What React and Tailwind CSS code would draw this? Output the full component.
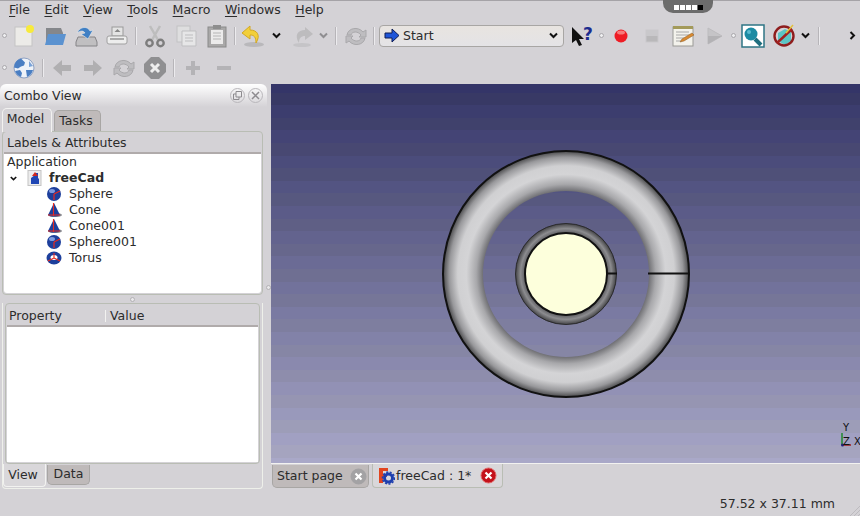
const font = { fontFamily: '"DejaVu Sans", sans-serif' };

// 3D view background is banded, top to bottom
const bands = Array.from({ length: 31 }, (_, i) => {
  const t = i / 30;
  const r = Math.round(52 + t * 117);
  const g = Math.round(53 + t * 115);
  const b = Math.round(104 + t * 96) - (i % 2 ? 6 : 0);
  return { y: Math.round(i * 12.6) - 4, fill: `rgb(${r},${g},${b})` };
});

function Scene() {
  return (
    <svg width="589" height="379" viewBox="0 0 589 379" className="block">
      <defs>
        <radialGradient id="big" gradientUnits="userSpaceOnUse" cx="295" cy="190" r="123">
          <stop offset="0.675" stopColor="#707074" />
          <stop offset="0.73" stopColor="#a8a8ab" />
          <stop offset="0.81" stopColor="#d4d4d6" />
          <stop offset="0.88" stopColor="#d0d0d2" />
          <stop offset="0.95" stopColor="#98989b" />
          <stop offset="1" stopColor="#48484a" />
        </radialGradient>
        <radialGradient id="small" gradientUnits="userSpaceOnUse" cx="295" cy="190" r="51">
          <stop offset="0.8" stopColor="#5a5a5e" />
          <stop offset="0.89" stopColor="#8c8c8f" />
          <stop offset="1" stopColor="#3c3c3e" />
        </radialGradient>
      </defs>
      {bands.map((b) => (
        <rect key={b.y} x="0" y={b.y} width="589" height="14" fill={b.fill} shapeRendering="crispEdges" />
      ))}
      <path
        fillRule="evenodd"
        fill="url(#big)"
        d="M295 67a123 123 0 1 0 0.01 0ZM295 107a83 83 0 1 1 -0.01 0Z"
      />
      <circle cx="295" cy="190" r="123" fill="none" stroke="#111" strokeWidth="2" />
      <circle cx="295" cy="190" r="50.5" fill="url(#small)" stroke="#2a2a2c" strokeWidth="1" />
      <circle cx="295" cy="190" r="41" fill="#fdffdc" stroke="#111" strokeWidth="2" />
      <path d="M377 189.5H418M336 189.5H346" stroke="#111" strokeWidth="2" />
      <path d="M571 349V361" stroke="#1f8a2f" strokeWidth="1.5" />
      <path d="M571 361H580" stroke="#a11d1d" strokeWidth="1.5" />
      <circle cx="571.5" cy="361" r="1.5" fill="#22227a" />
      <text x="572" y="347" fontSize="10" fill="#111" fontFamily="DejaVu Sans">Y</text>
      <text x="572" y="361" fontSize="10" fill="#111" fontFamily="DejaVu Sans">Z</text>
      <text x="583" y="361" fontSize="10" fill="#111" fontFamily="DejaVu Sans">X</text>
    </svg>
  );
}

const Slot = ({ children }) => (
  <div className="flex h-full w-[31px] shrink-0 items-center justify-center">{children}</div>
);

const Dot = () => (
  <div className="flex h-full w-2 shrink-0 items-center justify-center">
    <div className="h-[5px] w-[5px] rounded-full border border-[#a9a7ab] bg-[#eeeef0]" />
  </div>
);

const Sep = ({ className }) => (
  <div className={`flex h-full shrink-0 items-center justify-center ${className}`}>
    <div className="h-[18px] w-px bg-[#b7b5b9] shadow-[1px_0_0_#ecebee]" />
  </div>
);

const Chevron = ({ color = "#111" }) => (
  <svg width="9" height="7" viewBox="0 0 9 7">
    <path d="M1 1.5L4.5 5L8 1.5" fill="none" stroke={color} strokeWidth="2" />
  </svg>
);

const I = ({ children }) => (
  <svg width="24" height="24" viewBox="0 0 24 24">{children}</svg>
);

const NewIcon = () => (
  <I>
    <rect x="3" y="3" width="17" height="19" fill="#ecebe8" stroke="#c4c3c4" />
    <circle cx="18" cy="5" r="4" fill="#f7ea3c" />
  </I>
);
const OpenIcon = () => (
  <I>
    <path d="M3 4h15l2 5v11H3Z" fill="#85878b" />
    <path d="M5 10h18l-3 11H2Z" fill="#5b92d0" />
  </I>
);
const SaveIcon = () => (
  <I>
    <path d="M4 13h17l2 5v4H2v-4Z" fill="#c0bfc1" stroke="#858487" />
    <path d="M3 9C6 2 14 2 16 7l3-1-5 9-7-5 4-1C9 6 6 7 3 9Z" fill="#3f7fc4" stroke="#e9e9ea" strokeWidth="0.6" />
  </I>
);
const PrintIcon = () => (
  <I>
    <rect x="7" y="3" width="11" height="9" fill="#e4e4e4" stroke="#999" />
    <path d="M12.5 5l3 3h-6Z" fill="#888" />
    <rect x="2" y="12" width="20" height="8" rx="2" fill="#ededed" stroke="#a0a0a0" />
    <rect x="5" y="14" width="14" height="2" fill="#aaa" />
  </I>
);
const CutIcon = () => (
  <I>
    <path d="M7 2l8 14M17 2L9 16" stroke="#bdbdbd" strokeWidth="2.5" />
    <circle cx="6.5" cy="19" r="3.2" fill="none" stroke="#7d7d7d" strokeWidth="2.4" />
    <circle cx="17.5" cy="19" r="3.2" fill="none" stroke="#7d7d7d" strokeWidth="2.4" />
  </I>
);
const CopyIcon = () => (
  <I>
    <rect x="3" y="2" width="13" height="16" fill="#dededf" stroke="#c2c2c4" />
    <path d="M8 7h14v15H8Z" fill="#e6e6e7" stroke="#bfbfc1" />
    <path d="M11 11h8M11 14h8M11 17h8" stroke="#bdbdbf" />
  </I>
);
const PasteIcon = () => (
  <I>
    <rect x="3" y="3" width="18" height="20" fill="#a9a8a8" stroke="#8a8a8a" />
    <rect x="6" y="6" width="12" height="14" fill="#ecebeb" />
    <rect x="8" y="1" width="8" height="4" fill="#8e8e8e" />
    <path d="M8 9h8M8 12h8M8 15h8" stroke="#b5b5b5" />
  </I>
);
const UndoIcon = () => (
  <I>
    <ellipse cx="13" cy="20.5" rx="10" ry="2.5" fill="#b9b8bb" />
    <path d="M9 2L1 9l8 6v-4c4 0 6 2 6 8 5-8 1-13-6-13Z" fill="#f2cf3a" stroke="#d3a824" />
  </I>
);
const RedoIcon = () => (
  <I>
    <ellipse cx="11" cy="21" rx="9" ry="2" fill="#c5c4c7" />
    <path d="M14 3l8 7-8 6v-4c-4 0-6 2-6 7-5-8-1-13 6-13Z" fill="#bdbcbe" />
  </I>
);
const RefreshIcon = () => (
  <I>
    <path d="M3 11C4 4 14 2 19 8l3-2v7h-7l2-2C14 7 8 7 7 11Z" fill="#bebdc0" stroke="#a9a8ab" />
    <path d="M21 14c-1 7-11 9-16 3l-3 2v-7h7l-2 2c3 4 9 4 10 0Z" fill="#bebdc0" stroke="#a9a8ab" />
  </I>
);
const GlobeIcon = () => (
  <I>
    <circle cx="12" cy="12" r="10" fill="#eef2f8" stroke="#8fa2c4" />
    <path d="M9 2.5a10 10 0 0 0-7 9l4 1 3-2 3-1 1-3ZM3 15l5-1 2 3-1 4a10 10 0 0 1-6-6ZM14 14l7 0a10 10 0 0 1-6 7Z" fill="#4a7ec2" />
    <path d="M17 5l4 5-4 1Z" fill="#7ba3d8" />
  </I>
);
const BackIcon = () => (
  <I>
    <path d="M3 12l9-8v5h9v6h-9v5Z" fill="#b0afb1" />
  </I>
);
const ForwardIcon = () => (
  <I>
    <path d="M21 12l-9-8v5H3v6h9v5Z" fill="#b0afb1" />
  </I>
);
const StopIcon = () => (
  <I>
    <path d="M8 1h8l7 7v8l-7 7H8l-7-7V8Z" fill="#8f8f91" />
    <path d="M8 8l8 8M16 8l-8 8" stroke="#ededed" strokeWidth="3" />
  </I>
);
const PlusIcon = () => (
  <I>
    <path d="M12 5v14M5 12h14" stroke="#b4b3b6" strokeWidth="4" />
  </I>
);
const MinusIcon = () => (
  <I>
    <path d="M5 12h14" stroke="#b4b3b6" strokeWidth="4" />
  </I>
);
const WhatsThisIcon = () => (
  <I>
    <path d="M2 3v16l4-3 3 6 3-1-3-6h5Z" fill="#111" />
    <text x="13" y="16" fontSize="17" fontWeight="700" fill="#1c2c8e" fontFamily="DejaVu Sans">?</text>
  </I>
);
const RecordIcon = () => (
  <I>
    <circle cx="12" cy="12" r="6.5" fill="#ee1c25" />
    <ellipse cx="12" cy="8.5" rx="4" ry="2" fill="#f87a7a" />
  </I>
);
const MacroStopIcon = () => (
  <I>
    <rect x="6" y="6" width="12" height="12" fill="#b9b8ba" stroke="#c9c8cb" />
    <rect x="6" y="6" width="12" height="6" fill="#c9c8cb" />
  </I>
);
const MacroIcon = () => (
  <I>
    <rect x="2" y="3" width="20" height="19" fill="#f3f2ec" stroke="#9a9a96" />
    <rect x="2" y="2" width="20" height="3" fill="#a39a5a" />
    <path d="M5 8h13M5 11h13M5 14h8M5 17h6" stroke="#a8a8a8" />
    <path d="M9 18l2-3 10-6 2 2-10 6Z" fill="#d98a32" stroke="#8b5a22" strokeWidth="0.5" />
  </I>
);
const PlayIcon = () => (
  <I>
    <path d="M6 4l14 8-14 8Z" fill="#c5c4c7" stroke="#bdbcbf" />
    <path d="M6 12h14l-14 8Z" fill="#b3b2b5" />
  </I>
);
const ZoomIcon = () => (
  <I>
    <rect x="1" y="1" width="22" height="22" fill="#fff" stroke="#2e7585" strokeWidth="1.5" />
    <path d="M14 15l6 6" stroke="#1f6f7f" strokeWidth="4" />
    <circle cx="10" cy="10" r="6.5" fill="#1b8ba3" />
    <circle cx="8" cy="8" r="2" fill="#58bccf" />
  </I>
);
const NopeIcon = () => (
  <I>
    <path d="M6 9l7-4 6 3v9l-6 4-7-4Z" fill="#5cc5c5" />
    <circle cx="12" cy="12" r="9.5" fill="none" stroke="#8e1d1d" strokeWidth="2.4" />
    <path d="M5 19L20 5" stroke="#a3201f" strokeWidth="2.4" />
    <path d="M14 9l7-8" stroke="#e3c13a" strokeWidth="1.5" />
  </I>
);
const TinyClose = ({ fill, ring }) => (
  <svg width="17" height="17" viewBox="0 0 17 17">
    <circle cx="8.5" cy="8.5" r="7.5" fill={fill} stroke={ring} />
    <path d="M5.5 5.5l6 6M11.5 5.5l-6 6" stroke="#fff" strokeWidth="2.2" />
  </svg>
);
const DockBtn = ({ children }) => (
  <div className="flex h-[15px] w-[15px] items-center justify-center rounded-full border border-[#b9b7bb] text-[#8d8b8f]">
    {children}
  </div>
);

const SphereIcon = () => (
  <svg width="16" height="16" viewBox="0 0 16 16">
    <circle cx="8" cy="8" r="7" fill="#1d3f9c" />
    <ellipse cx="6" cy="5" rx="3" ry="2" fill="#7f9be0" />
    <path d="M8 8L14 5M8 8L8 14" stroke="#e8291f" strokeWidth="1.2" />
  </svg>
);
const ConeIcon = () => (
  <svg width="16" height="16" viewBox="0 0 16 16">
    <ellipse cx="9" cy="13" rx="7" ry="2" fill="#8a8a90" />
    <path d="M8 1L14 13C10 15 5 15 2 13Z" fill="#1d3f9c" />
    <path d="M7.5 1V14M2 13H14" stroke="#e8291f" strokeWidth="1.1" />
  </svg>
);
const TorusIcon = () => (
  <svg width="16" height="16" viewBox="0 0 16 16">
    <ellipse cx="8" cy="8" rx="7.5" ry="6.5" fill="#1d3f9c" />
    <ellipse cx="8" cy="7.5" rx="3.5" ry="2.5" fill="#fff" />
    <path d="M8 8V3M8 8L14 11M8 8L2 11" stroke="#e8291f" strokeWidth="1.1" />
  </svg>
);
const DocIcon = () => (
  <svg width="16" height="16" viewBox="0 0 16 16">
    <rect x="1" y="0.5" width="13" height="15" fill="#ececec" stroke="#c4c4c4" />
    <path d="M4 8l4-3v-2h3v5l1 1v5H4Z" fill="#2046b4" />
    <path d="M5 6l3-4 3 4Z" fill="#d2281e" />
  </svg>
);
const TabDocIcon = () => (
  <svg width="16" height="18" viewBox="0 0 16 18">
    <path d="M0 1h9v3H4v3h4v3H4v6H0Z" fill="#e2451f" />
    <circle cx="9.5" cy="11" r="4" fill="none" stroke="#1e3fae" strokeWidth="3" />
    <circle cx="9.5" cy="11" r="6" fill="none" stroke="#1e3fae" strokeWidth="1.5" strokeDasharray="2 1.6" />
  </svg>
);

const menus = ["File", "Edit", "View", "Tools", "Macro", "Windows", "Help"];
const tree = [
  { name: "Sphere", Icon: SphereIcon },
  { name: "Cone", Icon: ConeIcon },
  { name: "Cone001", Icon: ConeIcon },
  { name: "Sphere001", Icon: SphereIcon },
  { name: "Torus", Icon: TorusIcon },
];

export default function App() {
  return (
    <div
      style={font}
      className="relative flex h-[516px] w-[860px] flex-col overflow-hidden bg-[#d4d2d6] text-[12.5px] leading-4 text-[#2c2c2c]"
    >
      <div className="absolute left-[663px] top-0 flex h-[13px] w-[50px] items-start justify-center gap-px rounded-b-[10px] bg-[#6c6c6c] pt-[5px]">
        <span className="h-[5px] w-[5px] bg-white" />
        <span className="h-[5px] w-[5px] bg-white" />
        <span className="h-[5px] w-[5px] bg-white" />
        <span className="h-[5px] w-[5px] bg-white" />
        <span className="h-[5px] w-[5px] bg-black" />
      </div>

      {/* menu bar */}
      <div className="flex h-[19px] shrink-0 items-center border-t border-[#a5a3a7] pb-px pl-[9px]">
        {menus.map((m) => (
          <span key={m} className="mr-[14.5px]">
            <span className="underline underline-offset-2">{m[0]}</span>
            {m.slice(1)}
          </span>
        ))}
      </div>

      {/* toolbars */}
      <div className="flex h-[33px] shrink-0 items-center">
        <Dot />
        <Slot><NewIcon /></Slot>
        <Slot><OpenIcon /></Slot>
        <Slot><SaveIcon /></Slot>
        <Slot><PrintIcon /></Slot>
        <Sep className="w-[7px]" />
        <Slot><CutIcon /></Slot>
        <Slot><CopyIcon /></Slot>
        <Slot><PasteIcon /></Slot>
        <Sep className="w-[5px]" />
        <Slot><UndoIcon /></Slot>
        <div className="flex w-[19px] items-center justify-center pr-[3px]"><Chevron /></div>
        <Slot><RedoIcon /></Slot>
        <div className="flex w-[11px] items-center justify-center"><Chevron color="#8f8e91" /></div>
        <Sep className="w-3" />
        <div className="flex h-full w-[29px] items-center justify-center"><RefreshIcon /></div>
        <Sep className="w-[6px]" />
        <div className="ml-[3px] flex h-[22px] w-[185px] shrink-0 items-center justify-between rounded-[4px] border border-[#a8a6a4] bg-gradient-to-b from-[#e8e4e0] to-[#e4e3e6] pl-[4px] pr-[5px]">
          <span className="flex items-center gap-[3px]">
            <svg width="16" height="15" viewBox="0 0 16 15">
              <path d="M1 5h7V1l7 6.5L8 14v-4H1Z" fill="#1f55d8" stroke="#0e1d55" />
            </svg>
            Start
          </span>
          <Chevron />
        </div>
        <div className="ml-[3px] flex h-full w-[30px] items-center justify-center"><WhatsThisIcon /></div>
        <Dot />
        <Slot><RecordIcon /></Slot>
        <Slot><MacroStopIcon /></Slot>
        <Slot><MacroIcon /></Slot>
        <Slot><PlayIcon /></Slot>
        <Dot />
        <Slot><ZoomIcon /></Slot>
        <Slot><NopeIcon /></Slot>
        <div className="flex w-3 items-center justify-center"><Chevron /></div>
        <Sep className="w-[14px]" />
        <div className="ml-auto mr-[4px] flex w-[8px] items-center justify-center">
          <svg width="7" height="9" viewBox="0 0 7 9">
            <path d="M1.5 1L5 4.5L1.5 8" fill="none" stroke="#111" strokeWidth="2" />
          </svg>
        </div>
      </div>
      <div className="flex h-[32px] shrink-0 items-center pb-[1px]">
        <Dot />
        <Slot><GlobeIcon /></Slot>
        <Sep className="w-[7px]" />
        <Slot><BackIcon /></Slot>
        <Slot><ForwardIcon /></Slot>
        <Slot><RefreshIcon /></Slot>
        <Slot><StopIcon /></Slot>
        <Sep className="w-[7px]" />
        <Slot><PlusIcon /></Slot>
        <Slot><MinusIcon /></Slot>
      </div>

      <div className="flex min-h-0 flex-1">
        {/* combo view */}
        <div className="relative flex w-[271px] shrink-0 flex-col pl-px pr-[8px]">
          <div className="-ml-px -mr-[4px] flex h-[23px] shrink-0 items-center justify-between rounded-t-md bg-gradient-to-b from-white to-[#d4d2d6] pl-[4px] pr-[4px]">
            <span>Combo View</span>
            <span className="flex gap-[3px]">
              <DockBtn>
                <svg width="9" height="9" viewBox="0 0 9 9">
                  <path d="M3 .5h5.5V6H3ZM.5 3H3M.5 3v5.5H6V6" fill="none" stroke="currentColor" />
                </svg>
              </DockBtn>
              <DockBtn>
                <svg width="9" height="9" viewBox="0 0 9 9">
                  <path d="M1 1l7 7M8 1L1 8" stroke="currentColor" strokeWidth="1.5" />
                </svg>
              </DockBtn>
            </span>
          </div>

          <div className="flex h-[24px] shrink-0 items-end pl-px">
            <div className="z-10 -mb-px flex h-[24px] w-[50px] items-center justify-center rounded-t-[5px] border border-b-0 border-[#f2f2f0] bg-[#d4d2d6] pb-[3px] pr-[3px]">
              Model
            </div>
            <div className="ml-[2px] flex h-[21px] w-[47px] items-center justify-center rounded-t-[5px] border border-b-0 border-[#a8a6a4] bg-[#bfbaba] pb-[1px] pr-[3px]">
              Tasks
            </div>
          </div>

          <div className="ml-px flex h-[164px] shrink-0 flex-col rounded-[4px] border border-[#b9bdb4] p-px">
            <div className="flex h-[21px] shrink-0 items-center border-b-2 border-[#b0abab] pl-[3px] pt-px">
              Labels &amp; Attributes
            </div>
            <div className="flex-1 rounded-b-[3px] bg-white pl-[3px]">
              <div className="h-4">Application</div>
              <div className="flex h-4 items-center">
                <span className="ml-[3px] flex w-[7px] items-center justify-center">
                  <Chevron />
                </span>
                <span className="ml-[10px]"><DocIcon /></span>
                <b className="ml-[6px]">freeCad</b>
              </div>
              {tree.map(({ name, Icon }) => (
                <div key={name} className="flex h-4 items-center pl-[39px]">
                  <Icon />
                  <span className="ml-[7px]">{name}</span>
                </div>
              ))}
            </div>
          </div>

          <div className="flex h-[8px] shrink-0 items-center justify-center">
            <div className="h-[5px] w-[5px] rounded-full border border-[#b3b1b5] bg-[#e9e8ea]" />
          </div>

          <div className="ml-px flex h-[186px] shrink-0 flex-col rounded-b-[4px] border-b border-[#eef0ea] border-x">
            <div className="mx-[2px] flex h-[161px] shrink-0 flex-col rounded-[4px] border border-[#b9bdb4] p-px">
              <div className="flex h-[22px] shrink-0 items-center border-b-2 border-[#b0abab] pl-[2px] pt-px">
                <span className="w-[97px] border-r border-[#f2f2f0] leading-3">Property</span>
                <span className="pl-[4px]">Value</span>
              </div>
              <div className="flex-1 bg-white" />
            </div>
            <div className="flex items-start">
              <div className="flex h-[23px] w-[43px] items-center justify-center rounded-b-[4px] border border-t-0 border-[#f2f2f0] bg-[#d9d7da] pr-[3px]">
                View
              </div>
              <div className="ml-[1px] mt-[1px] flex h-[20px] w-[43px] items-center justify-center rounded-b-[5px] border border-t-0 border-[#a8a6a4] bg-[#bfbaba] pb-[2px]">
                Data
              </div>
            </div>
          </div>

          <div className="absolute right-[0px] top-[201px] h-[5px] w-[5px] rounded-full border border-[#b3b1b5] bg-[#e9e8ea]" />
        </div>

        {/* 3D view */}
        <div className="flex min-w-0 flex-1 flex-col">
          <Scene />
          <div className="flex h-[25px] shrink-0 items-start border-t border-[#f2f2f0] pl-px">
            <div className="mt-px flex h-[23px] w-[97px] items-center justify-between rounded-b-[5px] border border-t-0 border-[#a8a6a4] bg-[#bfbaba] pl-[4px] pr-[1px]">
              Start page
              <TinyClose fill="#a3a2a4" ring="#a3a2a4" />
            </div>
            <div className="ml-[3px] flex h-[24px] w-[131px] items-center rounded-b-[4px] border border-t-0 border-[#b9bdb4] bg-[#d9d7da] pl-[6px]">
              <TabDocIcon />
              <span className="ml-px">freeCad : 1*</span>
              <span className="ml-[9px]"><TinyClose fill="#c4121b" ring="#e06a6a" /></span>
            </div>
          </div>
          <div className="flex flex-1 items-center justify-end pr-[25px] pt-[4px]">
            57.52 x 37.11 mm
          </div>
        </div>
      </div>

      <svg width="11" height="11" viewBox="0 0 11 11" className="absolute bottom-0 right-0">
        <path d="M1 11L11 1M5 11L11 5M9 11L11 9" stroke="#bdbbbf" />
      </svg>
    </div>
  );
}
